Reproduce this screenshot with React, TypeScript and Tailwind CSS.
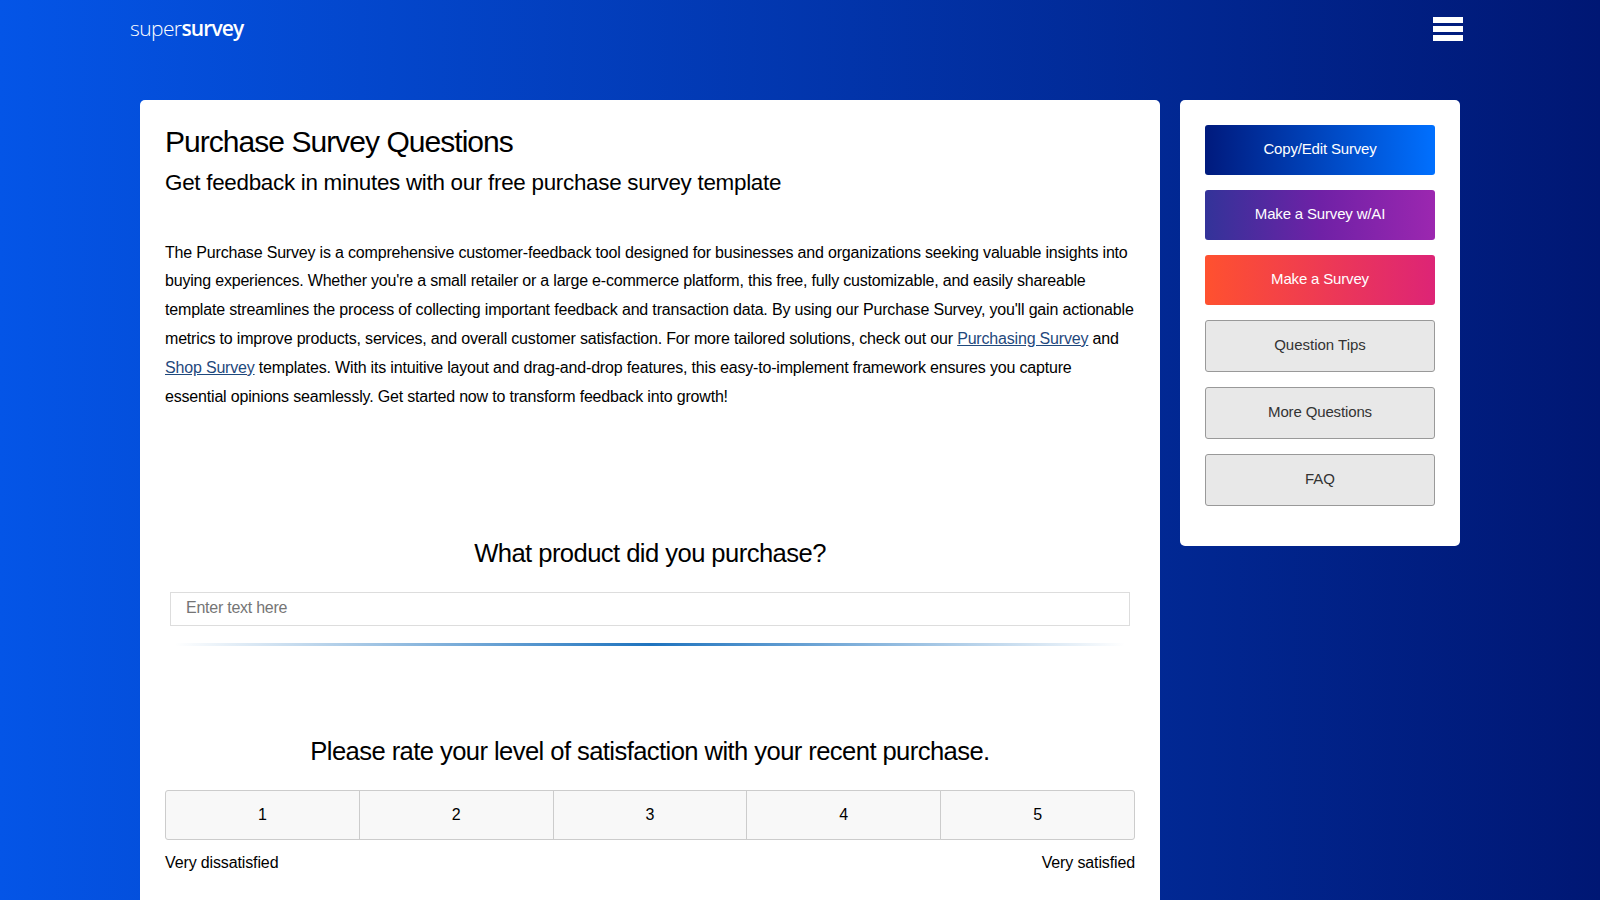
const SIDE_LINKS = [
  { label: "Copy/Edit Survey", style: "h-[50px] tracking-[-0.17px] text-white bg-linear-to-r/srgb from-[#001a7d] to-[#0070ff]" },
  { label: "Make a Survey w/AI", style: "h-[50px] tracking-[-0.17px] text-white bg-linear-to-r/srgb from-[#333399] via-[#6f21a6] to-[#9c27b0]" },
  { label: "Make a Survey", style: "h-[50px] tracking-[-0.17px] text-white bg-linear-to-r/srgb from-[#ff512f] to-[#dd2476]" },
  { label: "Question Tips", style: "h-[52px] text-[#333] bg-[#e8e8e8] border border-[#999]" },
  { label: "More Questions", style: "h-[52px] tracking-[-0.14px] text-[#333] bg-[#e8e8e8] border border-[#999]" },
  { label: "FAQ", style: "h-[52px] text-[#333] bg-[#e8e8e8] border border-[#999]" },
];

const RATINGS = [1, 2, 3, 4, 5];

function Header() {
  return (
    <header className="mx-auto flex h-[100px] w-[1340px] items-start justify-between">
      <a href="#" className="mt-[14px] font-['Open_Sans',sans-serif] text-[21px] leading-[28px] font-light tracking-[-0.6px] text-white">
        super<span className="font-semibold tracking-[-0.85px]">survey</span>
      </a>
      <button className="mt-[17px] mr-[7px] flex w-[30px] flex-col gap-[3px]" aria-label="Menu">
        <span className="h-[6px] w-full bg-white" />
        <span className="h-[6px] w-full bg-white" />
        <span className="h-[6px] w-full bg-white" />
      </button>
    </header>
  );
}

function Sidebar() {
  return (
    <aside className="h-[446px] w-[280px] rounded-[5px] bg-white p-[25px]">
      <div className="flex flex-col gap-[15px]">
        {SIDE_LINKS.map((link) => (
          <a key={link.label} href="#" className={`flex items-center justify-center rounded-[3px] pb-[2px] text-[15px] ${link.style}`}>
            {link.label}
          </a>
        ))}
      </div>
    </aside>
  );
}

export default function App() {
  return (
    <div className="h-screen overflow-hidden bg-linear-to-r/srgb from-[#0455e7] to-[#001774] font-['Liberation_Sans',Arial,sans-serif] text-black">
      <Header />
      <div className="mx-auto flex w-[1320px] items-start gap-5">
        <main className="h-[1200px] w-[1020px] rounded-[5px] bg-white px-[25px] pt-[20px]">
          <h1 className="text-[30px] leading-[44px] tracking-[-0.96px] whitespace-nowrap">Purchase Survey Questions</h1>
          <h2 className="text-[22.4px] leading-[38px] tracking-[-0.28px] whitespace-nowrap">
            Get feedback in minutes with our free purchase survey template
          </h2>

          <p className="mt-[36.6px] text-[16px] leading-[28.8px] tracking-[-0.184px] whitespace-nowrap">
            The Purchase Survey is a comprehensive customer-feedback tool designed for businesses and organizations seeking valuable insights into
            <br />
            <span className="tracking-[-0.2px]">
              buying experiences. Whether you're a small retailer or a large e-commerce platform, this free, fully customizable, and easily shareable
            </span>
            <br />
            <span className="tracking-[-0.178px]">
              template streamlines the process of collecting important feedback and transaction data. By using our Purchase Survey, you'll gain actionable
            </span>
            <br />
            metrics to improve products, services, and overall customer satisfaction. For more tailored solutions, check out our{" "}
            <a href="#" className="text-[#1f497d] underline">Purchasing Survey</a> and
            <br />
            <a href="#" className="text-[#1f497d] underline">Shop Survey</a> templates. With its intuitive layout and drag-and-drop features, this easy-to-implement framework ensures you capture
            <br />
            essential opinions seamlessly. Get started now to transform feedback into growth!
          </p>

          {/* Question 1 */}
          <section className="mt-[123.6px]">
            <h3 className="text-center text-[25.6px] leading-[36px] tracking-[-0.56px]">What product did you purchase?</h3>
            <input
              type="text"
              placeholder="Enter text here"
              className="mx-[5px] mt-[21px] block h-[34px] w-[960px] border border-[#ddd] px-[15px] pb-[2px] text-[16px] tracking-[-0.25px] placeholder:text-[#757575]"
            />
            <div className="mx-[10px] mt-[17px] h-[3px] bg-linear-to-r/srgb from-[#1e73be]/0 via-[#1e73be] to-[#1e73be]/0" />
          </section>

          {/* Question 2 */}
          <section className="mt-[87px]">
            <h3 className="text-center text-[25.6px] leading-[36px] tracking-[-0.58px]">Please rate your level of satisfaction with your recent purchase.</h3>
            <div className="mt-[21px] flex h-[50px]">
              {RATINGS.map((n) => (
                <button
                  key={n}
                  className="flex-1 border border-[#ccc] bg-[#f8f8f8] text-[16px] not-first:-ml-px first:rounded-l-[3px] last:rounded-r-[3px]"
                >
                  {n}
                </button>
              ))}
            </div>
            <div className="mt-[11px] flex justify-between text-[16px] leading-[24px] tracking-[-0.13px]">
              <span>Very dissatisfied</span>
              <span>Very satisfied</span>
            </div>
          </section>
        </main>
        <Sidebar />
      </div>
    </div>
  );
}
